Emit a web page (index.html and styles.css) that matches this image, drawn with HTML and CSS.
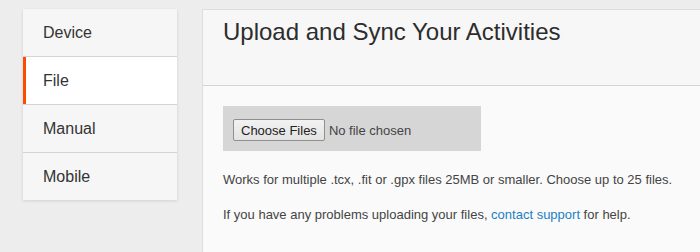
FILE: index.html
```html
<!DOCTYPE html>
<html lang="en">
<head>
    <meta charset="UTF-8">
    <title>Upload and Sync Your Activities</title>
    <link rel="stylesheet" href="styles.css">
</head>
<body>

    <div class="page">
        <!-- Upload type menu -->
        <ul class="side-nav">
            <li><a href="#">Device</a></li>
            <li class="active"><a href="#">File</a></li>
            <li><a href="#">Manual</a></li>
            <li><a href="#">Mobile</a></li>
        </ul>

        <div class="panel">
            <div class="panel-header">
                <h1>Upload and Sync Your Activities</h1>
            </div>
            <div class="panel-body">
                <div class="file-box">
                    <input type="file" multiple>
                </div>
                <p>Works for multiple .tcx, .fit or .gpx files 25MB or smaller. Choose up to 25 files.</p>
                <p>If you have any problems uploading your files, <a href="#">contact support</a> for help.</p>
            </div>
        </div>
    </div>

</body>
</html>
```

FILE: styles.css
```css
body {
    margin: 0;
    padding: 0;
    background-color: #ededed;
    font-family: "Liberation Sans", Arial, sans-serif;
    color: #333;
}

.page {
    display: flex;
    align-items: flex-start;
    gap: 25px;
    padding: 9px 0 0 23px;
    height: 243px;
    overflow: hidden;
}

.side-nav {
    list-style: none;
    margin: 0;
    padding: 0;
    width: 154px;
    flex-shrink: 0;
    background-color: #f6f6f6;
    box-shadow: 0 1px 3px rgba(0, 0, 0, 0.12);
}

.side-nav li {
    border-bottom: 1px solid #d4d4d4;
}

.side-nav li:last-child {
    border-bottom: none;
}

.side-nav a {
    display: block;
    height: 47px;
    line-height: 47px;
    padding-left: 20px;
    font-size: 16px;
    color: #333;
    text-decoration: none;
}

.side-nav li.active a {
    background-color: #fff;
    border-left: 3px solid #fc4c02;
    padding-left: 17px;
}

.panel {
    flex: 1;
    margin-right: -4px;
    border: 1px solid #dedede;
    background-color: #fafafa;
    min-height: 260px;
}

.panel-header {
    height: 76px;
    padding: 8px 20px 0;
    box-sizing: border-box;
    background-color: #f7f7f7;
    border-bottom: 1px solid #d4d4d4;
}

.panel-header h1 {
    margin: 0;
    font-size: 24px;
    line-height: 28px;
    font-weight: normal;
    color: #2d2d2d;
}

.panel-body {
    padding: 20px 20px 0;
}

.file-box {
    width: 258px;
    height: 45px;
    box-sizing: border-box;
    padding: 13px 10px 0;
    background-color: #d6d6d6;
}

.file-box input {
    font-family: "Liberation Sans", Arial, sans-serif;
    font-size: 13px;
    color: #444;
}

.file-box input::file-selector-button {
    font-family: "Liberation Sans", Arial, sans-serif;
    font-size: 13px;
    color: #222;
    height: 22px;
    padding: 0 7px;
    margin-right: 4px;
    background: linear-gradient(#f2f2f2, #e3e3e3);
    border: 1px solid #8f8f8f;
    border-radius: 2px;
}

.panel-body p {
    margin: 20px 0 0;
    font-size: 13px;
    line-height: 17px;
    color: #444;
}

.panel-body p + p {
    margin-top: 18px;
}

.panel-body a {
    color: #1a80c4;
    text-decoration: none;
}
```
